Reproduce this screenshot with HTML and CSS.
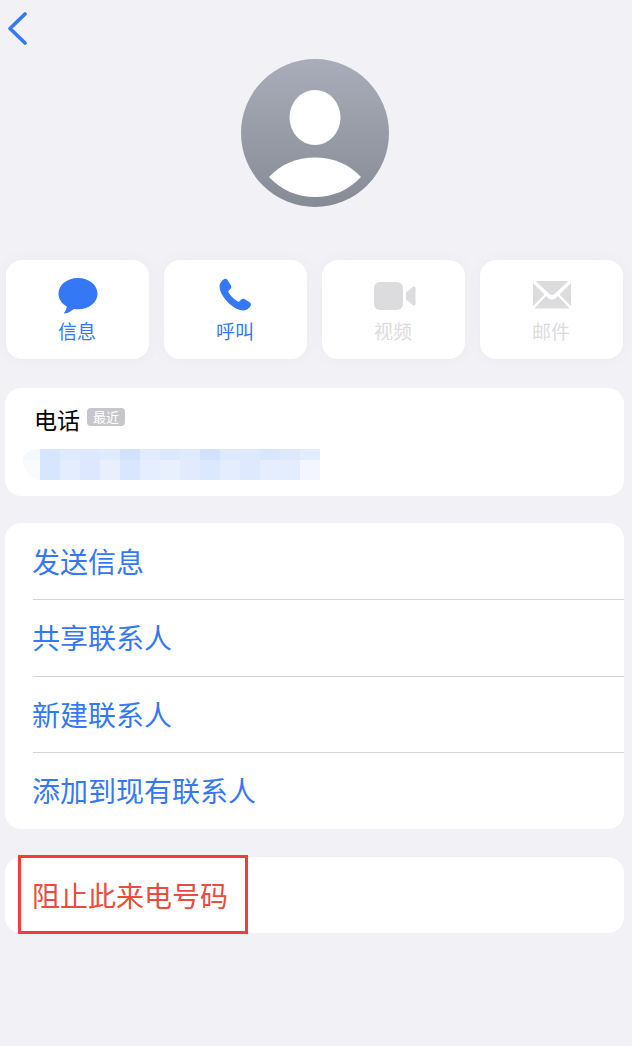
FILE: index.html
```html
<!DOCTYPE html>
<html lang="zh-CN">
<head>
  <meta charset="UTF-8">
  <title>来电详情</title>
  <link rel="stylesheet" href="styles.css">
</head>
<body>
  <header class="top">
    <a class="back" href="#">
      <svg width="22" height="34" viewBox="0 0 22 34"><path d="M19 3 L4 17.500 L19 32" fill="none" stroke="#3478f6" stroke-width="3.6" stroke-linecap="round" stroke-linejoin="round"/></svg>
    </a>
    <svg class="avatar" width="148" height="148" viewBox="0 0 148 148">
      <defs>
        <linearGradient id="avatarFill" x1="0" y1="0" x2="0" y2="1">
          <stop offset="0" stop-color="#a9adb9"/>
          <stop offset="1" stop-color="#878b95"/>
        </linearGradient>
      </defs>
      <circle cx="74" cy="74" r="74" fill="url(#avatarFill)"/>
      <ellipse cx="74" cy="58.500" rx="25.500" ry="27.500" fill="#fff"/>
      <path d="M28 118 C40 105 56 98.500 74 98.500 C92 98.500 108 105 120 118 C108 131 92 138 74 138 C56 138 40 131 28 118 Z" fill="#fff"/>
    </svg>
  </header>

  <nav class="actions">
    <a class="action" href="#">
      <svg width="40" height="36" viewBox="0 0 40 36"><path d="M20 0 C30.800 0 39.500 6.900 39.500 15.700 C39.500 24.500 30.800 31.300 20 31.300 C18.500 31.300 17.200 31.200 15.900 31 C13.300 33.300 9.800 35 6.900 35.500 C6.200 35.600 5.900 35 6.300 34.500 C7.400 33.200 8.500 31.200 8.800 28.400 C3.500 25.600 0.500 21 0.500 15.700 C0.500 6.900 9.200 0 20 0 Z" fill="#3478f6"/></svg>
      <span>信息</span>
    </a>
    <a class="action" href="#">
      <svg class="icon-call" width="40" height="36" viewBox="0 0 40 36"><path d="M8.500 1.500 C9.800 0.500 11.600 0.700 12.500 2 L15.800 7.200 C16.600 8.500 16.400 10 15.300 11 L13.700 12.500 C13.200 13 13.100 13.700 13.500 14.300 C15.800 18.200 18.800 21.200 22.700 23.500 C23.300 23.900 24 23.800 24.500 23.300 L26 21.700 C27 20.600 28.500 20.400 29.800 21.200 L34.600 24.300 C36 25.200 36.300 27 35.300 28.300 C33.800 30.400 31.500 32.500 29 32.500 C18.500 32.500 4.500 18.500 4.500 8 C4.500 5.500 6.500 3 8.500 1.500 Z" fill="#3478f6"/></svg>
      <span>呼叫</span>
    </a>
    <a class="action is-off" href="#">
      <svg class="icon-video" width="42" height="36" viewBox="0 0 42 36"><rect x="0" y="4" width="29" height="28" rx="6" fill="#dcdcde"/><path d="M32 14.500 L39 8.800 C40.300 7.900 41.500 8.500 41.500 10 L41.500 26 C41.500 27.500 40.300 28.100 39 27.200 L32 21.500 Z" fill="#dcdcde"/></svg>
      <span>视频</span>
    </a>
    <a class="action is-off" href="#">
      <svg width="40" height="36" viewBox="0 0 40 36"><path d="M3.500 3 L36.500 3 L21.800 16.500 C20.700 17.500 19.300 17.500 18.200 16.500 Z" fill="#dcdcde"/><path d="M1 5 L12.500 16.500 L1 28 Z M39 5 L27.500 16.500 L39 28 Z" fill="#dcdcde"/><path d="M14 18 L16.800 20.500 C18.700 22 21.300 22 23.200 20.500 L26 18 L37.500 30.500 L2.500 30.500 Z" fill="#dcdcde"/></svg>
      <span>邮件</span>
    </a>
  </nav>

  <section class="card phone">
    <div class="phone-label">
      <span>电话</span>
      <span class="tag">最近</span>
    </div>
    <svg class="mosaic" width="400" height="32" viewBox="0 0 400 32" shape-rendering="crispEdges">
      <path d="M0 11 L0 10 C0 5 6 0 17 0 L17 11 Z" fill="#f3f7fe"/>
      <path d="M0 11 L17 11 L17 31 C6 31 0 20 0 11 Z" fill="#fbfbfd"/>
      <g>
        <rect x="17" y="0" width="20" height="11" fill="#d7e5fe"/><rect x="37" y="0" width="20" height="11" fill="#dfeafe"/>
        <rect x="57" y="0" width="20" height="11" fill="#dde8fe"/><rect x="77" y="0" width="20" height="11" fill="#e1ebfe"/>
        <rect x="97" y="0" width="20" height="11" fill="#d3e2fc"/><rect x="117" y="0" width="20" height="11" fill="#e2ebfe"/>
        <rect x="137" y="0" width="20" height="11" fill="#dce8fe"/><rect x="157" y="0" width="20" height="11" fill="#e1ebfe"/>
        <rect x="177" y="0" width="20" height="11" fill="#d2e2fd"/><rect x="197" y="0" width="20" height="11" fill="#dfe9fe"/>
        <rect x="217" y="0" width="20" height="11" fill="#dfe9fe"/><rect x="237" y="0" width="20" height="11" fill="#dae6fd"/>
        <rect x="257" y="0" width="20" height="11" fill="#dfe8fb"/><rect x="277" y="0" width="20" height="11" fill="#e3ecfd"/>
      </g>
      <g>
        <rect x="17" y="11" width="20" height="20" fill="#d7e5fe"/><rect x="37" y="11" width="20" height="20" fill="#e3edfe"/>
        <rect x="57" y="11" width="20" height="20" fill="#dde8fe"/><rect x="77" y="11" width="20" height="20" fill="#e9effc"/>
        <rect x="97" y="11" width="20" height="20" fill="#d9e6fd"/><rect x="117" y="11" width="20" height="20" fill="#e5eefe"/>
        <rect x="137" y="11" width="20" height="20" fill="#e9f0fd"/><rect x="157" y="11" width="20" height="20" fill="#e2ebfd"/>
        <rect x="177" y="11" width="20" height="20" fill="#dce8fe"/><rect x="197" y="11" width="20" height="20" fill="#e4edfd"/>
        <rect x="217" y="11" width="20" height="20" fill="#dfe9fe"/><rect x="237" y="11" width="20" height="20" fill="#e6eefd"/>
        <rect x="257" y="11" width="20" height="20" fill="#e4edfd"/><rect x="277" y="11" width="20" height="20" fill="#f3f6fe"/>
      </g>
    </svg>
  </section>

  <section class="card list">
    <a class="row" href="#">发送信息</a>
    <a class="row" href="#">共享联系人</a>
    <a class="row" href="#">新建联系人</a>
    <a class="row" href="#">添加到现有联系人</a>
  </section>

  <section class="card list block">
    <a class="row row-danger" href="#">阻止此来电号码</a>
    <div class="mark"></div>
  </section>
</body>
</html>
```

FILE: styles.css
```css
body {
  margin: 0;
  height: 1046px;
  overflow: hidden;
  background: #f1f1f6;
  font-family: "Noto Sans CJK SC", "Liberation Sans", sans-serif;
}
a {
  text-decoration: none;
}
.top {
  position: relative;
  display: flex;
  justify-content: center;
  padding: 59px 3px 0 0;
  height: 260px;
  box-sizing: border-box;
}
.back {
  position: absolute;
  left: 6px;
  top: 11px;
}
.avatar {
  display: block;
}
.actions {
  display: grid;
  grid-template-columns: repeat(4, 143px);
  column-gap: 15px;
  padding-left: 6px;
}
.action {
  height: 99px;
  box-sizing: border-box;
  padding-top: 18px;
  background: #fff;
  border-radius: 16px;
  box-shadow: 0 0 14px rgba(120, 120, 140, 0.05);
  display: flex;
  flex-direction: column;
  align-items: center;
  color: #3478f6;
  font-size: 19px;
  line-height: 26px;
}
.action svg {
  display: block;
  margin-bottom: 4px;
  flex: none;
}
.action span {
  margin-left: -1px;
}
.action .icon-call {
  margin-left: -2px;
}
.action .icon-video {
  margin-left: 2px;
}
.is-off {
  color: #dcdcde;
}
.card {
  margin-left: 5px;
  width: 619px;
  background: #fff;
  border-radius: 16px;
}
.phone {
  margin-top: 29px;
  height: 108px;
  box-sizing: border-box;
  padding: 15px 0 0 18px;
}
.phone-label {
  display: flex;
  align-items: center;
  gap: 7px;
  padding-left: 11px;
  font-size: 23px;
  line-height: 32px;
  color: #000;
}
.tag {
  background: #c7c7cb;
  color: #fff;
  font-size: 13px;
  line-height: 18px;
  padding: 0 6px;
  border-radius: 4px;
  margin-top: -4px;
}
.mosaic {
  display: block;
  margin-top: 14px;
}
.list {
  margin-top: 27px;
  padding-left: 27px;
  box-sizing: border-box;
}
.row {
  display: block;
  height: 76.500px;
  line-height: 75px;
  box-sizing: border-box;
  border-top: 1px solid #d3d3d6;
  margin-left: 1px;
  text-indent: -1px;
  font-size: 28px;
  color: #3478f6;
}
.row:first-child {
  height: 76px;
  line-height: 76px;
  border-top: none;
}
.row-danger {
  color: #ea4d3d;
}
.block {
  margin-top: 28px;
  position: relative;
}
.block .row {
  line-height: 76px;
}
.mark {
  position: absolute;
  left: 13px;
  top: -2px;
  width: 230px;
  height: 79px;
  box-sizing: border-box;
  border: 3px solid #f73b3b;
}
```
